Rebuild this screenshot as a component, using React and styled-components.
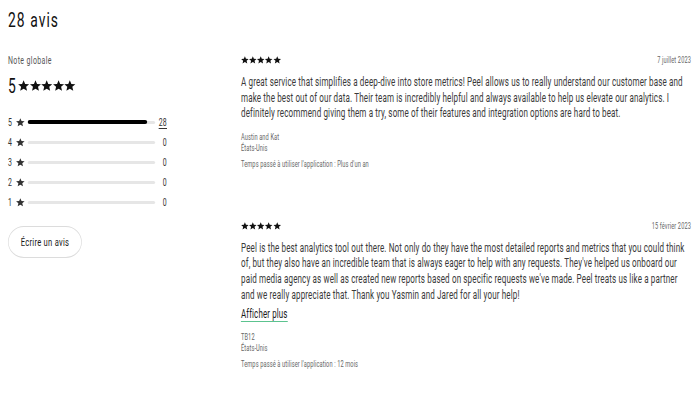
import React from 'react';
import styled, { createGlobalStyle } from 'styled-components';

// the reference is rendered in a narrow condensed face, so the page is laid out wide and squeezed
const SX = 0.66;
const px = (v) => v / SX; // reference px -> layout px (horizontal)
const rad = (r) => `${px(r)}px / ${r}px`;

const GlobalStyle = createGlobalStyle`
  html, body {
    margin: 0;
    padding: 0;
    background: #ffffff;
    overflow: hidden;
  }
  body {
    font-family: Roboto, "Liberation Sans", sans-serif;
    color: #1a1a1a;
  }
`;

const Page = styled.div`
  box-sizing: border-box;
  width: ${px(700)}px;
  padding: 6px ${px(9)}px 0 ${px(8)}px;
  transform: scaleX(${SX});
  transform-origin: 0 0;
`;

const Title = styled.h1`
  margin: 0;
  font-size: 21px;
  line-height: 28px;
  font-weight: 400;
  letter-spacing: 1.6px;
  color: #111;
`;

const Main = styled.div`
  display: flex;
  gap: ${px(74)}px;
  margin-top: 16px;
`;

const Summary = styled.div`
  width: ${px(159)}px;
  flex-shrink: 0;
  display: flex;
  flex-direction: column;
`;

const Label = styled.div`
  margin-top: 4px;
  font-size: 10.5px;
  line-height: 14px;
  color: #555;
  letter-spacing: 0.6px;
`;

const Overall = styled.div`
  display: flex;
  align-items: center;
  gap: ${px(2)}px;
  margin-top: 6px;
  height: 24px;
  font-size: 21px;
  color: #111;
`;

const StarRow = styled.div`
  display: flex;
  gap: ${(p) => px(p.$gap)}px;
  color: #111;
`;

const Bars = styled.div`
  display: flex;
  flex-direction: column;
  margin-top: 14px;
`;

const BarRow = styled.div`
  display: grid;
  grid-template-columns: ${px(6)}px ${px(10)}px 1fr ${px(10)}px;
  column-gap: ${px(2)}px;
  align-items: center;
  height: 20px;
  font-size: 10.5px;
  color: #333;
`;

const Track = styled.div`
  height: 3px;
  border-radius: ${rad(1.5)};
  background: #e6e6e6;
  display: flex;
  align-items: center;
`;

const Fill = styled.div`
  height: 4px;
  flex-shrink: 0;
  border-radius: ${rad(2)};
  background: #000;
`;

const Count = styled.span`
  text-align: right;
  text-decoration: ${(p) => (p.$link ? 'underline' : 'none')};
  text-underline-offset: 2px;
  letter-spacing: 0.4px;
`;

const WriteButton = styled.button`
  box-sizing: border-box;
  margin-top: 14px;
  width: ${px(74)}px;
  height: 32px;
  border: 1px solid #dcdcdc;
  border-left-width: ${px(1)}px;
  border-right-width: ${px(1)}px;
  border-radius: ${rad(16)};
  background: #fff;
  font-family: Roboto, "Liberation Sans", sans-serif;
  font-size: 11.5px;
  letter-spacing: 0.4px;
  color: #1a1a1a;
  padding: 0;
`;

const Reviews = styled.div`
  flex: 1;
  display: flex;
  flex-direction: column;
  gap: 46px;
`;

const Review = styled.article`
  padding-top: 5px;
`;

const ReviewHead = styled.div`
  display: flex;
  justify-content: space-between;
  align-items: center;
  height: 10px;
`;

const Date = styled.span`
  font-size: 8.5px;
  color: #666;
  letter-spacing: 0.2px;
`;

const Body = styled.p`
  margin: 10px 0 0;
  font-size: 12.2px;
  line-height: 15.6px;
  letter-spacing: 0.2px;
  color: #3a3a3a;
`;

const More = styled.span`
  display: inline-block;
  margin-top: -1px;
  font-size: 12px;
  line-height: 13px;
  letter-spacing: 0.2px;
  color: #1a1a1a;
  border-bottom: 1.5px solid #5cc38f;
`;

const Meta = styled.div`
  margin-top: ${(p) => p.$gap || 0}px;
  font-size: 8.6px;
  line-height: 11px;
  color: #666;
  letter-spacing: 0.15px;
`;

const Star = ({ size }) => (
  <svg
    width={px(size)}
    height={size}
    viewBox="0 0 24 24"
    preserveAspectRatio="none"
    fill="currentColor"
    style={{ display: 'block' }}
  >
    <path d="M12 0.5L15.2 8.1L23.4 8.8L17.2 14.2L19.1 22.2L12 18L4.9 22.2L6.8 14.2L0.6 8.8L8.8 8.1Z" />
  </svg>
);

const Stars = ({ size, gap = 0, count = 5 }) => (
  <StarRow $gap={gap}>
    {Array.from({ length: count }).map((_, i) => (
      <Star key={i} size={size} />
    ))}
  </StarRow>
);

const distribution = [
  { stars: 5, count: 28, fill: 94 },
  { stars: 4, count: 0, fill: 0 },
  { stars: 3, count: 0, fill: 0 },
  { stars: 2, count: 0, fill: 0 },
  { stars: 1, count: 0, fill: 0 },
];

const reviews = [
  {
    date: '7 juillet 2023',
    text: 'A great service that simplifies a deep-dive into store metrics! Peel allows us to really understand our customer base and make the best out of our data. Their team is incredibly helpful and always available to help us elevate our analytics. I definitely recommend giving them a try, some of their features and integration options are hard to beat.',
    author: 'Austin and Kat',
    country: 'États-Unis',
    usage: "Temps passé à utiliser l'application : Plus d'un an",
  },
  {
    date: '15 février 2023',
    text: "Peel is the best analytics tool out there. Not only do they have the most detailed reports and metrics that you could think of, but they also have an incredible team that is always eager to help with any requests. They've helped us onboard our paid media agency as well as created new reports based on specific requests we've made. Peel treats us like a partner and we really appreciate that. Thank you Yasmin and Jared for all your help!",
    more: true,
    author: 'TB12',
    country: 'États-Unis',
    usage: "Temps passé à utiliser l'application : 12 mois",
  },
];

export default function App() {
  return (
    <>
      <GlobalStyle />
      <Page>
        <Title>28 avis</Title>
        <Main>
          <Summary>
            <Label>Note globale</Label>
            <Overall>
              <span>5</span>
              <Stars size={11.6} />
            </Overall>
            <Bars>
              {distribution.map((d) => (
                <BarRow key={d.stars}>
                  <span>{d.stars}</span>
                  <Star size={9} />
                  <Track>
                    <Fill style={{ width: `${d.fill}%` }} />
                  </Track>
                  <Count $link={d.count > 0}>{d.count}</Count>
                </BarRow>
              ))}
            </Bars>
            <div>
              <WriteButton>Écrire un avis</WriteButton>
            </div>
          </Summary>
          <Reviews>
            {reviews.map((r) => (
              <Review key={r.date}>
                <ReviewHead>
                  <Stars size={8} />
                  <Date>{r.date}</Date>
                </ReviewHead>
                <Body>{r.text}</Body>
                {r.more && <More>Afficher plus</More>}
                <Meta $gap={10}>{r.author}</Meta>
                <Meta>{r.country}</Meta>
                <Meta $gap={5}>{r.usage}</Meta>
              </Review>
            ))}
          </Reviews>
        </Main>
      </Page>
    </>
  );
}
